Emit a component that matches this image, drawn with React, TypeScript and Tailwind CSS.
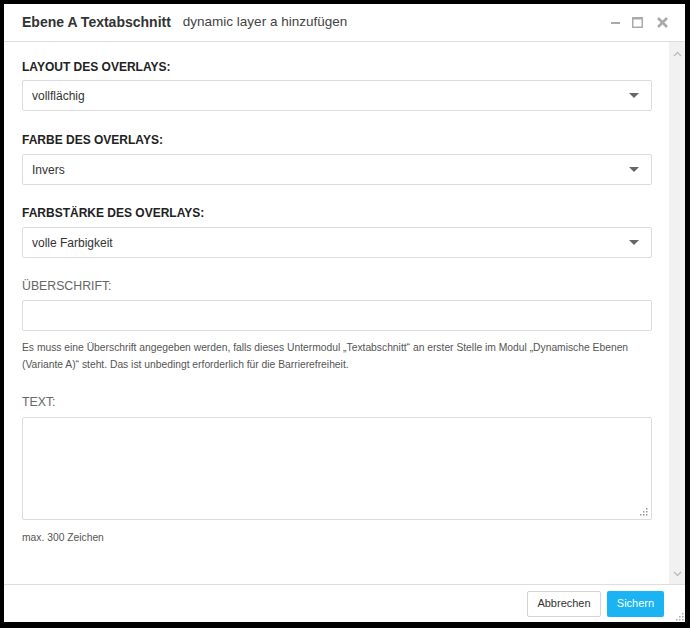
import React from "react";

const font = { fontFamily: '"Liberation Sans", Arial, sans-serif' };

function Select({ value }: { value: string }) {
  return (
    <div className="h-[31px] border border-[#dcdcdc] rounded-[2px] bg-white flex items-center justify-between pl-[9px] pr-[12px]">
      <span className="text-[12px] text-[#333]">{value}</span>
      <svg width="10" height="6" viewBox="0 0 10 6">
        <path d="M0 0 L10 0 L5 5 Z" fill="#666" />
      </svg>
    </div>
  );
}

function Grip({ color = "#aaa" }: { color?: string }) {
  const dots = [
    [6, 0],
    [3, 3],
    [6, 3],
    [0, 6],
    [3, 6],
    [6, 6],
  ];
  return (
    <svg width="8" height="8" viewBox="0 0 8 8">
      {dots.map(([x, y], i) => (
        <rect key={i} x={x} y={y} width="1.5" height="1.5" fill={color} />
      ))}
    </svg>
  );
}

export default function App() {
  return (
    <div className="w-[690px] h-[628px] bg-black pt-[4px] pl-[4px] pr-[5px] pb-[6px]" style={font}>
      <div className="relative w-full h-full bg-white flex flex-col">
        {/* header */}
        <div className="h-[38px] shrink-0 border-b border-[#dedede] flex items-center pl-[18px] pr-[17px]">
          <span className="text-[14px] font-bold text-[#333]">Ebene A Textabschnitt</span>
          <span className="text-[13.5px] text-[#444] ml-[12px]">dynamic layer a hinzufügen</span>
          <div className="ml-auto flex items-center">
            <svg width="10" height="10" viewBox="0 0 10 10" className="mr-[11px]">
              <rect x="0" y="4" width="9" height="2" fill="#aaa" />
            </svg>
            <svg width="11" height="11" viewBox="0 0 11 11" className="mr-[14px]">
              <rect x="0.75" y="0.75" width="9.5" height="9.5" fill="none" stroke="#aaa" strokeWidth="1.5" />
              <rect x="0" y="0" width="11" height="2.5" fill="#aaa" />
            </svg>
            <svg width="11" height="11" viewBox="0 0 11 11">
              <path d="M1 1 L10 10 M10 1 L1 10" stroke="#aaa" strokeWidth="2.6" />
            </svg>
          </div>
        </div>
        {/* body */}
        <div className="flex-1 flex min-h-0">
          <div className="flex-1 pl-[18px] pr-[17px] pt-[17px]">
            <div className="text-[12px] leading-[16px] font-bold text-[#222]">LAYOUT DES OVERLAYS:</div>
            <div className="mt-[5px]">
              <Select value="vollflächig" />
            </div>
            <div className="mt-[21px] text-[12px] leading-[16px] font-bold text-[#222]">FARBE DES OVERLAYS:</div>
            <div className="mt-[6px]">
              <Select value="Invers" />
            </div>
            <div className="mt-[20px] text-[12px] leading-[16px] font-bold text-[#222]">FARBSTÄRKE DES OVERLAYS:</div>
            <div className="mt-[6px]">
              <Select value="volle Farbigkeit" />
            </div>
            <div className="mt-[20px] text-[12.3px] leading-[16px] text-[#666]">ÜBERSCHRIFT:</div>
            <div className="mt-[6px] h-[31px] border border-[#dcdcdc] rounded-[2px]" />
            <div className="mt-[8px] text-[10.3px] leading-[17px] text-[#555]">
              Es muss eine Überschrift angegeben werden, falls dieses Untermodul „Textabschnitt“ an erster Stelle im Modul „Dynamische Ebenen (Variante A)“ steht. Das ist unbedingt erforderlich für die Barrierefreiheit.
            </div>
            <div className="mt-[21px] text-[12.3px] leading-[16px] text-[#666]">TEXT:</div>
            <div className="mt-[7px] h-[103px] border border-[#dcdcdc] rounded-[2px] relative">
              <div className="absolute right-[3px] bottom-[3px]">
                <Grip color="#999" />
              </div>
            </div>
            <div className="mt-[11px] text-[10.3px] leading-[14px] text-[#555]">max. 300 Zeichen</div>
          </div>
          {/* scrollbar */}
          <div className="w-[16px] shrink-0 bg-[#f1f1f1] flex flex-col items-center justify-between pt-[9px] pb-[7px]">
            <svg width="9" height="6" viewBox="0 0 9 6">
              <path d="M1 5 L4.5 1.5 L8 5" fill="none" stroke="#bbb" strokeWidth="1.3" />
            </svg>
            <svg width="9" height="6" viewBox="0 0 9 6">
              <path d="M1 1 L4.5 4.5 L8 1" fill="none" stroke="#bbb" strokeWidth="1.3" />
            </svg>
          </div>
        </div>
        {/* footer */}
        <div className="h-[38px] shrink-0 border-t border-[#dedede] flex items-center justify-end pr-[21px] gap-[6px]">
          <button className="h-[26px] w-[74px] border border-[#d4d4d4] rounded-[2px] bg-white text-[11px] text-[#333]">
            Abbrechen
          </button>
          <button className="h-[26px] w-[57px] rounded-[2px] bg-[#1bb3f2] text-[11px] text-white">
            Sichern
          </button>
        </div>
        <div className="absolute right-[1px] bottom-[1px]">
          <Grip color="#aaa" />
        </div>
      </div>
    </div>
  );
}
